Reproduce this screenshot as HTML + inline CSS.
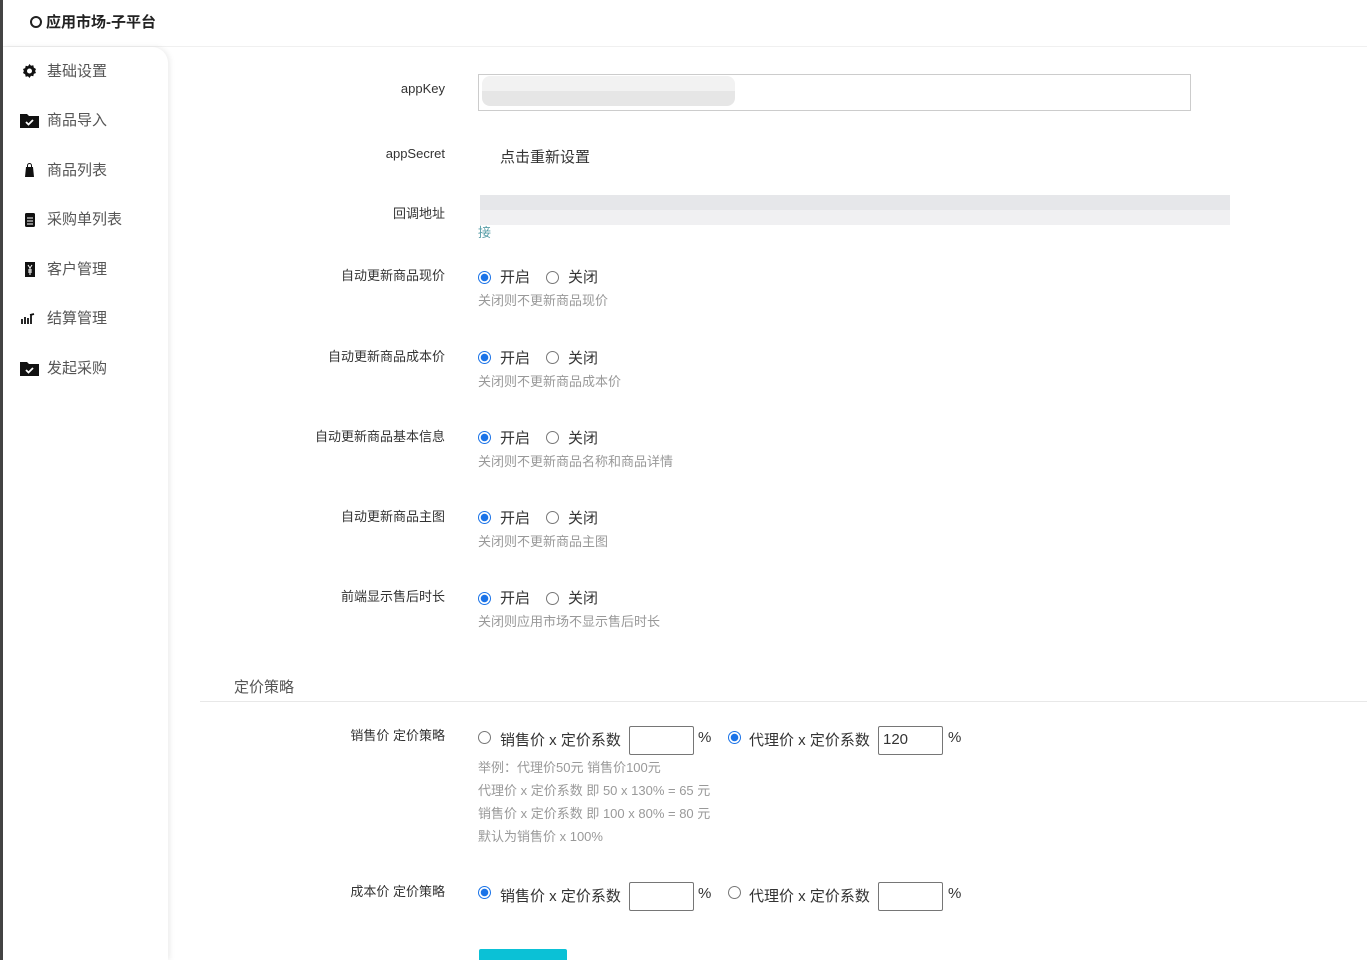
<!DOCTYPE html>
<html><head><meta charset="utf-8"><style>
*{margin:0;padding:0;box-sizing:border-box}
html,body{width:1367px;height:960px;overflow:hidden}
body{background:#fff;font-family:"Liberation Sans","Noto Sans CJK SC",sans-serif;position:relative;color:#333}
.a{position:absolute;white-space:nowrap}
.lbl{position:absolute;right:922px;font-size:13px;color:#333}
.help{position:absolute;left:478px;font-size:13px;color:#999}
.r{position:absolute;width:13px;height:13px;border-radius:50%;border:1px solid #777;background:#fff}
.r.on{border:1px solid #1a73e8;background:radial-gradient(circle,#1a73e8 0 3.5px,#fff 4px)}
.t{position:absolute;font-size:15px;color:#333;white-space:nowrap}
.inp{position:absolute;width:65px;height:29px;border:1px solid #767676;border-radius:2px;font-size:15px;padding:4px 4px;color:#333}
.nav{position:absolute;left:20px;font-size:15px;color:#555;display:flex;align-items:center}
.nav svg{width:19px;height:16px;margin-right:8px}
</style></head><body>
<div class="a" style="left:0;top:0;width:3px;height:960px;background:#444"></div>
<div class="a" style="left:3px;top:0;width:1364px;height:47px;background:#fff;border-bottom:1px solid #f0f0f0"></div>
<div class="a" style="left:30px;top:11px;font-size:15px;font-weight:bold;color:#222;display:flex;align-items:center"><span style="width:12px;height:12px;border:2px solid #222;border-radius:50%;margin-right:4px;display:inline-block"></span>应用市场-子平台</div>
<div class="a" style="left:3px;top:47px;width:165px;height:913px;background:#fff;border-top-right-radius:16px;box-shadow:2px 0 6px rgba(0,0,0,0.08)"></div>
<div class="nav" style="top:60px"><svg viewBox="0 0 16 16"><path d="M8 1l1.5 1.8 2.3-.5.5 2.3L14.5 6 13.6 8l.9 2-2.2.9-.5 2.3-2.3-.5L8 15l-1.5-1.8-2.3.5-.5-2.3L1.5 10 2.4 8l-.9-2 2.2-.9.5-2.3 2.3.5z" fill="#111"/><circle cx="8" cy="8" r="2.5" fill="#fff"/></svg>基础设置</div>
<div class="nav" style="top:109px"><svg viewBox="0 0 19 16"><path d="M0 2h7l2 2h10v12H0z" fill="#111"/><path d="M6 10l2.5 2.5L13 8" stroke="#fff" stroke-width="1.8" fill="none"/></svg>商品导入</div>
<div class="nav" style="top:159px"><svg viewBox="0 0 19 16"><path d="M6 5h7l1 10H5z" fill="#111"/><path d="M7.5 5V3.5a2 2 0 0 1 4 0V5" stroke="#111" fill="none"/></svg>商品列表</div>
<div class="nav" style="top:208px"><svg viewBox="0 0 19 16"><rect x="5" y="2" width="10" height="14" rx="1.5" fill="#111"/><path d="M7 7h6M7 10h6M7 13h6" stroke="#fff"/></svg>采购单列表</div>
<div class="nav" style="top:258px"><svg viewBox="0 0 19 16"><rect x="5" y="1" width="10" height="15" fill="#111"/><path d="M8 4l2 3 2-3M10 7v7M8 9h4M8 11h4" stroke="#fff" fill="none"/></svg>客户管理</div>
<div class="nav" style="top:307px"><svg viewBox="0 0 19 16"><path d="M2 9v5M5 7v7M8 8v6M11 5v9M14 4l-4 1" stroke="#111" stroke-width="1.8" fill="none"/></svg>结算管理</div>
<div class="nav" style="top:357px"><svg viewBox="0 0 19 16"><path d="M0 2h7l2 2h10v12H0z" fill="#111"/><path d="M6 10l2.5 2.5L13 8" stroke="#fff" stroke-width="1.8" fill="none"/></svg>发起采购</div>

<div class="lbl" style="top:81px">appKey</div>
<div class="a" style="left:478px;top:74px;width:713px;height:37px;border:1px solid #ccc"></div>
<div class="a" style="left:482px;top:76px;width:253px;height:30px;background:linear-gradient(#f2f2f2 50%,#e6e6e6 50%);border-radius:8px"></div>
<div class="lbl" style="top:146px">appSecret</div>
<div class="t" style="left:500px;top:146px">点击重新设置</div>
<div class="lbl" style="top:203px">回调地址</div>
<div class="a" style="left:480px;top:195px;width:750px;height:30px;background:linear-gradient(#e6e7ea 50%,#f0f0f2 50%)"></div>
<div class="a" style="left:478px;top:222px;font-size:13px;color:#5a9fa8">接</div>

<div class="lbl" style="top:265px">自动更新商品现价</div>
<div class="r on" style="left:478px;top:271px"></div><div class="t" style="left:500px;top:266px">开启</div>
<div class="r" style="left:546px;top:271px"></div><div class="t" style="left:568px;top:266px">关闭</div>
<div class="help" style="top:290px">关闭则不更新商品现价</div>

<div class="lbl" style="top:346px">自动更新商品成本价</div>
<div class="r on" style="left:478px;top:351px"></div><div class="t" style="left:500px;top:347px">开启</div>
<div class="r" style="left:546px;top:351px"></div><div class="t" style="left:568px;top:347px">关闭</div>
<div class="help" style="top:371px">关闭则不更新商品成本价</div>

<div class="lbl" style="top:426px">自动更新商品基本信息</div>
<div class="r on" style="left:478px;top:431px"></div><div class="t" style="left:500px;top:427px">开启</div>
<div class="r" style="left:546px;top:431px"></div><div class="t" style="left:568px;top:427px">关闭</div>
<div class="help" style="top:451px">关闭则不更新商品名称和商品详情</div>

<div class="lbl" style="top:506px">自动更新商品主图</div>
<div class="r on" style="left:478px;top:511px"></div><div class="t" style="left:500px;top:507px">开启</div>
<div class="r" style="left:546px;top:511px"></div><div class="t" style="left:568px;top:507px">关闭</div>
<div class="help" style="top:531px">关闭则不更新商品主图</div>

<div class="lbl" style="top:586px">前端显示售后时长</div>
<div class="r on" style="left:478px;top:592px"></div><div class="t" style="left:500px;top:587px">开启</div>
<div class="r" style="left:546px;top:592px"></div><div class="t" style="left:568px;top:587px">关闭</div>
<div class="help" style="top:611px">关闭则应用市场不显示售后时长</div>

<div class="a" style="left:234px;top:676px;font-size:15px;color:#555">定价策略</div>
<div class="a" style="left:200px;top:701px;width:1167px;height:1px;background:#e8e8e8"></div>

<div class="lbl" style="top:725px">销售价 定价策略</div>
<div class="r" style="left:478px;top:731px"></div><div class="t" style="left:500px;top:729px">销售价 x 定价系数</div>
<div class="inp" style="left:629px;top:726px"></div><div class="t" style="left:698px;top:729px">%</div>
<div class="r on" style="left:728px;top:731px"></div><div class="t" style="left:749px;top:729px">代理价 x 定价系数</div>
<div class="inp" style="left:878px;top:726px">120</div><div class="t" style="left:948px;top:729px">%</div>
<div class="help" style="top:757px">举例：代理价50元 销售价100元</div>
<div class="help" style="top:780px">代理价 x 定价系数 即 50 x 130% = 65 元</div>
<div class="help" style="top:803px">销售价 x 定价系数 即 100 x 80% = 80 元</div>
<div class="help" style="top:826px">默认为销售价 x 100%</div>

<div class="lbl" style="top:881px">成本价 定价策略</div>
<div class="r on" style="left:478px;top:886px"></div><div class="t" style="left:500px;top:885px">销售价 x 定价系数</div>
<div class="inp" style="left:629px;top:882px"></div><div class="t" style="left:698px;top:885px">%</div>
<div class="r" style="left:728px;top:886px"></div><div class="t" style="left:749px;top:885px">代理价 x 定价系数</div>
<div class="inp" style="left:878px;top:882px"></div><div class="t" style="left:948px;top:885px">%</div>

<div class="a" style="left:479px;top:949px;width:88px;height:11px;background:#0bc1d6;border-radius:2px 2px 0 0"></div>
</body></html>
